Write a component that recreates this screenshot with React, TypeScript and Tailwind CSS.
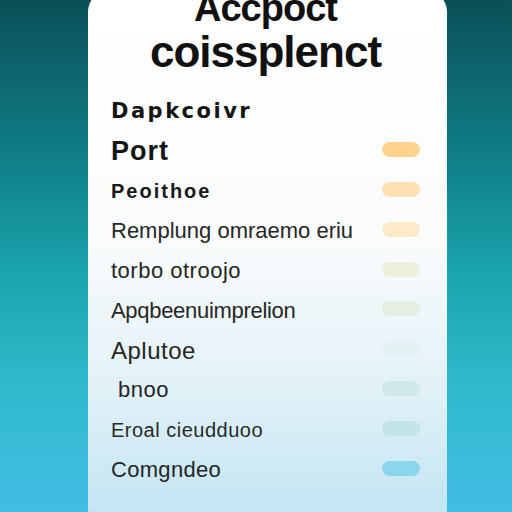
const rows = [
  { label: 'Dapkcoivr', cls: "font-bold text-[21px] tracking-[2.5px] text-[#151515] font-['DejaVu_Sans',sans-serif]", pill: '' },
  { label: 'Port', cls: 'font-bold text-[27px] tracking-[1px] text-[#151515]', pill: 'bg-[#fdd38e]' },
  { label: 'Peoithoe', cls: 'font-bold text-[20px] tracking-[2px] text-[#1a1a1a]', pill: 'bg-[#fde0b4]' },
  { label: 'Remplung omraemo eriu', cls: 'text-[22px] text-[#262626]', pill: 'bg-[#fdebc8]' },
  { label: 'torbo otroojo', cls: 'text-[22px] tracking-[0.5px] text-[#262626]', pill: 'bg-[#eef0dc]' },
  { label: 'Apqbeenuimprelion', cls: 'text-[22px] tracking-[-0.3px] text-[#262626]', pill: 'bg-[#e6eedf]' },
  { label: 'Aplutoe', cls: 'text-[24px] tracking-[0.5px] text-[#262626]', pill: 'bg-[#e2f1f2]' },
  { label: 'bnoo', cls: 'text-[22px] pl-[7px] tracking-[0.5px] text-[#262626]', pill: 'bg-[#cfe9e9]' },
  { label: 'Eroal cieudduoo', cls: 'text-[20px] tracking-[0.5px] text-[#2a2a2a]', pill: 'bg-[#c2e5e8]' },
  { label: 'Comgndeo', cls: 'text-[22px] tracking-[0.3px] text-[#262626]', pill: 'bg-[#8ad6ef]' },
];

export default function App() {
  return (
    <div className="w-[512px] h-[512px] overflow-hidden bg-[linear-gradient(180deg,#0a4f57_0%,#11858e_35%,#1ca7b0_55%,#30b9cc_75%,#41bde4_100%)] font-['Liberation_Sans',Arial,sans-serif]">
      <div className="ml-[88px] mt-[-10px] w-[359px] h-[540px] rounded-[22px] bg-[linear-gradient(180deg,#ffffff_0%,#fbfcfd_45%,#e6f3f8_70%,#bfe4f3_100%)] px-[23px] pr-[27px]">
        <div className="h-[102px] flex flex-col items-center text-[#111]">
          <div className="h-[40px] leading-[40px] text-[38px] font-bold tracking-[-1px] mt-[-2px]">Accpoct</div>
          <div className="h-[46px] leading-[46px] text-[44px] font-bold tracking-[-1px] mt-[1px]">coissplenct</div>
        </div>
        {rows.map((r, i) => (
          <div key={i} className="h-[39.8px] flex items-center justify-between">
            <span className={r.cls + ' leading-none whitespace-nowrap'}>{r.label}</span>
            {r.pill ? <span className={'w-[38px] h-[15px] rounded-full shrink-0 -mt-[4px] ' + r.pill} /> : null}
          </div>
        ))}
      </div>
    </div>
  );
}
